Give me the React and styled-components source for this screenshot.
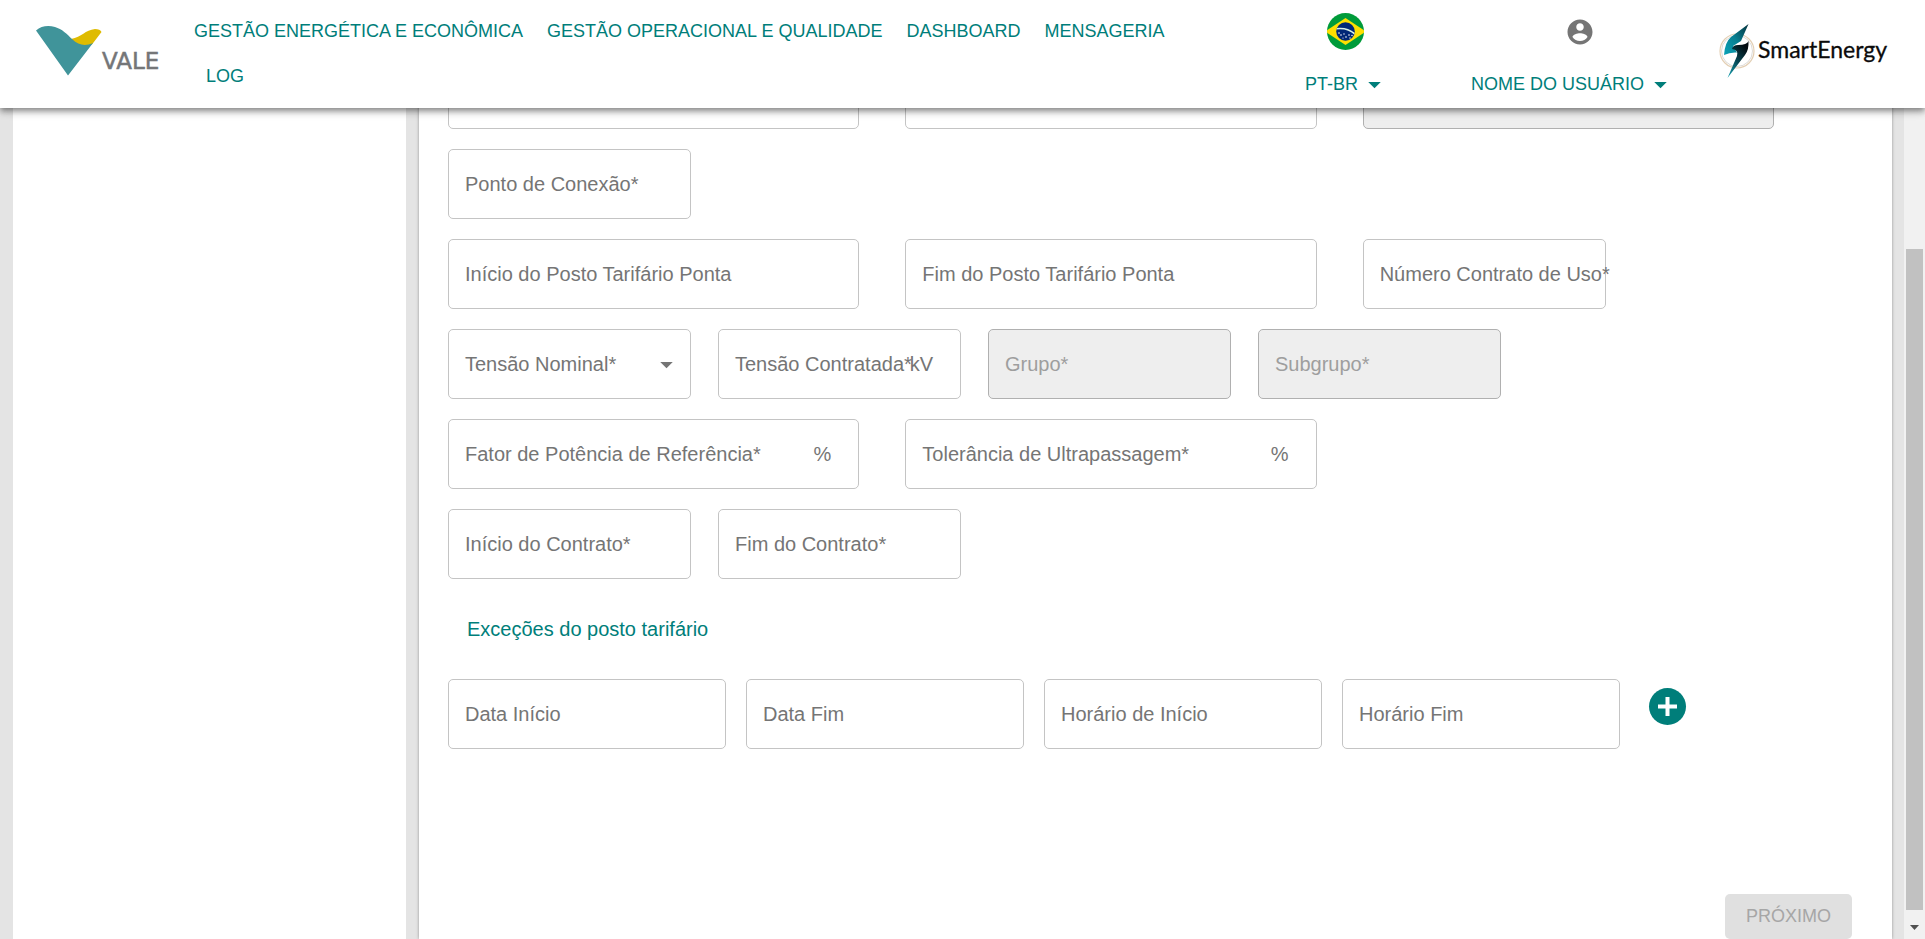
import React, { useId, useLayoutEffect, useRef } from 'react';
import styled, { createGlobalStyle } from 'styled-components';

const teal = '#007e7a';
const grey = '#757575';

const GlobalStyle = createGlobalStyle`
  *, *::before, *::after { box-sizing: border-box; }
  body {
    margin: 0;
    background: #e4e4e4;
    font-family: "Liberation Sans", Arial, sans-serif;
  }
`;

const Page = styled.div`
  display: flex;
  flex-direction: column;
  height: 100vh;
`;

const Header = styled.header`
  position: relative;
  z-index: 2;
  display: flex;
  flex-shrink: 0;
  align-items: flex-start;
  min-height: 108px;
  padding: 0 35px 0 36px;
  background: #fff;
  box-shadow:
    0 3px 5px -1px rgba(0, 0, 0, 0.3),
    0 5px 6px rgba(0, 0, 0, 0.16),
    0 1px 12px rgba(0, 0, 0, 0.14);
`;

const LogoLink = styled.a`
  display: block;
  flex-shrink: 0;
  margin-top: 24px;
  line-height: 0;
`;

const Nav = styled.nav`
  display: flex;
  flex: 1;
  flex-wrap: wrap;
  min-width: 0;
  margin: 9px 90px 0 28px;
`;

const NavLink = styled.a`
  padding: 0 12px;
  color: ${teal};
  font-size: 18px;
  line-height: 45px;
  text-decoration: none;
  white-space: nowrap;

  &:first-child { padding-left: 0; }
`;

const HeaderMenu = styled.div`
  display: flex;
  flex-direction: column;
  flex-shrink: 0;
  align-items: center;
  gap: 12px;
  margin-right: ${(p) => p.$after}px;
  padding-top: 13px;
`;

const MenuPicture = styled.div`
  display: flex;
  align-items: center;
  height: 37px;
  padding-left: ${(p) => p.$indent || 0}px;
`;

const MenuButton = styled.button`
  display: flex;
  align-items: center;
  gap: 4px;
  height: 45px;
  padding: 0 10px;
  border: 0;
  background: none;
  color: ${teal};
  font: inherit;
  font-size: 18px;
  white-space: nowrap;
`;

const Body = styled.div`
  display: flex;
  flex: 1;
  min-height: 0;
`;

const Scroller = styled.main`
  flex: 1;
  min-width: 0;
  overflow-y: auto;
  scrollbar-width: none;
`;

const Content = styled.div`
  display: flex;
  gap: 13px;
  min-height: 100%;
  padding: 0 12px 0 13px;
`;

const Sidebar = styled.aside`
  flex: 0 0 393px;
  background: #fff;
`;

const Panel = styled.form`
  display: flex;
  flex: 1;
  flex-direction: column;
  gap: 20px;
  min-width: 0;
  padding: 0 40px 0 29px;
  background: #fff;
  box-shadow: 0 0 3px rgba(0, 0, 0, 0.35);
`;

const ThirdsRow = styled.div`
  display: grid;
  grid-template-columns: repeat(3, minmax(0, 1fr));
  gap: 46px;
  padding-right: 78px;
`;

const CompactRow = styled.div`
  display: flex;
  gap: 27px;
`;

const ExceptionRow = styled.div`
  display: flex;
  align-items: flex-start;
  gap: 20px;
`;

const fieldWidths = { full: '100%', compact: '243px', exception: '278px' };

const FieldBox = styled.div`
  display: grid;
  grid-template-areas: 'field';
  grid-template-columns: minmax(0, 1fr);
  align-items: center;
  width: ${(p) => fieldWidths[p.$size]};
  min-width: 0;
  height: 70px;

  > * { grid-area: field; }
`;

const Control = styled.input`
  width: 100%;
  min-width: 0;
  height: 100%;
  margin: 0;
  padding: 0 17px;
  border: 1px solid ${(p) => (p.disabled ? '#b0b0b0' : '#c4c4c4')};
  border-radius: 5px;
  appearance: none;
  background: ${(p) => (p.disabled ? '#eee' : '#fff')};
  color: #212121;
  font: inherit;
  font-size: 20px;
`;

const FieldLabel = styled.label`
  padding-left: 17px;
  color: ${(p) => (p.$disabled ? '#9e9e9e' : grey)};
  font-size: 20px;
  line-height: 24px;
  pointer-events: none;
  white-space: nowrap;
`;

const Adornment = styled.span`
  display: flex;
  justify-self: end;
  padding-right: 28px;
  color: ${grey};
  font-size: 20px;
  line-height: 24px;
  pointer-events: none;
`;

const CaretSlot = styled(Adornment)`
  padding-right: 12px;
`;

const SectionTitle = styled.h2`
  margin: 18px 0;
  padding-left: 19px;
  color: ${teal};
  font-size: 20px;
  font-weight: 400;
  line-height: 24px;
`;

const AddButton = styled.button`
  display: flex;
  align-items: center;
  justify-content: center;
  flex-shrink: 0;
  width: 37px;
  height: 37px;
  margin: 9px 0 0 9px;
  padding: 0;
  border: 0;
  border-radius: 50%;
  background: ${teal};
`;

const NextButton = styled.button`
  align-self: flex-end;
  height: 45px;
  margin-top: 125px;
  padding: 0 21px;
  border: 0;
  border-radius: 5px;
  background: #e0e0e0;
  color: #a6a6a6;
  font: inherit;
  font-size: 18px;
`;

const ScrollTrack = styled.div`
  display: flex;
  flex-direction: column;
  flex: 0 0 21px;
  align-items: center;
  padding-top: 21px;
  background: #f1f1f1;
`;

const ScrollSpace = styled.div`
  flex: 120;
`;

const ScrollThumb = styled.div`
  flex: 661;
  width: 17px;
  background: #c1c1c1;
`;

const ScrollArrow = styled.div`
  display: flex;
  align-items: center;
  justify-content: center;
  width: 100%;
  height: 29px;
  padding-top: 6px;
`;

function Caret({ color = teal }) {
  return (
    <svg width="25" height="25" viewBox="0 0 24 24" fill={color} aria-hidden="true">
      <path d="M6 9.5l6 6 6-6z" />
    </svg>
  );
}

function Field({ label, size = 'full', disabled, unit, select }) {
  const id = useId();
  return (
    <FieldBox $size={size}>
      <Control as={select ? 'select' : 'input'} id={id} disabled={disabled} />
      {label && <FieldLabel htmlFor={id} $disabled={disabled}>{label}</FieldLabel>}
      {unit && <Adornment>{unit}</Adornment>}
      {select && <CaretSlot><Caret color={grey} /></CaretSlot>}
    </FieldBox>
  );
}

function ValeLogo() {
  return (
    <svg width="130" height="54" viewBox="0 0 130 54" role="img" aria-label="Vale">
      <path d="M35 15C46 13 49 6 59 5C62 5 65 6 65.500 8L56 20.500C48 25 40 20 35 15Z" fill="#dfbb00" />
      <path d="M0 6.500C5 2 12 1 19 3C26 5 31 10 36 15C43 22 50 22 57 19L32 51.500Z" fill="#40949a" />
      <text x="66" y="45" fill="#747678" stroke="#747678" strokeWidth="0.500" fontFamily="DejaVu Sans, sans-serif" fontSize="23">VALE</text>
    </svg>
  );
}

function SmartEnergyLogo() {
  return (
    <svg width="171" height="54" viewBox="0 0 171 54" role="img" aria-label="SmartEnergy">
      <defs>
        <linearGradient id="boltTop" x1="1" y1="0" x2="0" y2="1">
          <stop offset="0" stopColor="#06303a" />
          <stop offset="0.5" stopColor="#087f91" />
          <stop offset="1" stopColor="#0aa3b8" />
        </linearGradient>
        <linearGradient id="boltBottom" x1="0" y1="1" x2="0.6" y2="0">
          <stop offset="0" stopColor="#16a5b5" />
          <stop offset="0.55" stopColor="#064450" />
          <stop offset="1" stopColor="#020b10" />
        </linearGradient>
      </defs>
      <circle cx="18" cy="27" r="17" fill="none" stroke="#e3cfb4" strokeWidth="1.200" />
      <circle cx="18" cy="27" r="15.500" fill="none" stroke="#cfcac4" strokeWidth="0.700" />
      <path d="M29.500 0L12 13Q6 18 5 31Q11 28 18 28.500L14 22L22 17Z" fill="url(#boltTop)" />
      <path d="M29.500 17Q28 21 19 21Q14 21 13 25Q20 26 18 32L8.500 54L26 31Q30 26 29.500 17Z" fill="url(#boltBottom)" />
      <text x="39" y="34" fill="#0b0b0b" stroke="#0b0b0b" strokeWidth="0.300" fontFamily="Lato, sans-serif" fontSize="23">SmartEnergy</text>
    </svg>
  );
}

function BrazilFlag() {
  return (
    <svg width="37" height="37" viewBox="0 0 37 37" role="img" aria-label="Brasil">
      <defs>
        <clipPath id="flagRound"><circle cx="18.500" cy="18.500" r="18.500" /></clipPath>
        <clipPath id="globeRound"><circle cx="18.500" cy="18.500" r="9.300" /></clipPath>
      </defs>
      <g clipPath="url(#flagRound)">
        <rect width="37" height="37" fill="#009b3a" />
        <path d="M18.500 5L39 18.500L18.500 32L-2 18.500Z" fill="#fedf00" />
        <circle cx="18.500" cy="18.500" r="9.300" fill="#002776" />
        <path d="M8 16Q20 13.500 29 22" fill="none" stroke="#d7efe6" strokeWidth="1.600" clipPath="url(#globeRound)" />
        <g fill="#fff">
          <circle cx="12" cy="20" r="0.800" /><circle cx="14" cy="22" r="0.800" />
          <circle cx="17" cy="21" r="0.700" /><circle cx="19" cy="24" r="0.800" />
          <circle cx="22" cy="22" r="0.800" /><circle cx="23" cy="25" r="0.700" />
          <circle cx="25" cy="22.500" r="0.700" /><circle cx="16" cy="25" r="0.600" />
        </g>
      </g>
    </svg>
  );
}

function AccountIcon() {
  return (
    <svg width="30" height="30" viewBox="0 0 24 24" fill={grey} aria-hidden="true">
      <path d="M12 2C6.480 2 2 6.480 2 12s4.480 10 10 10 10-4.480 10-10S17.520 2 12 2zm0 3c1.660 0 3 1.340 3 3s-1.340 3-3 3-3-1.340-3-3 1.340-3 3-3zm0 14.200c-2.500 0-4.710-1.280-6-3.220.030-1.990 4-3.080 6-3.080 1.990 0 5.970 1.090 6 3.080-1.290 1.940-3.500 3.220-6 3.220z" />
    </svg>
  );
}

const links = [
  'GESTÃO ENERGÉTICA E ECONÔMICA',
  'GESTÃO OPERACIONAL E QUALIDADE',
  'DASHBOARD',
  'MENSAGERIA',
  'LOG',
];

export default function App() {
  const scroller = useRef(null);

  // The form opens scrolled to its end, where the next-step button is.
  useLayoutEffect(() => {
    scroller.current.scrollTop = scroller.current.scrollHeight;
  }, []);

  return (
    <Page>
      <GlobalStyle />
      <Header>
        <LogoLink href="#"><ValeLogo /></LogoLink>
        <Nav>
          {links.map((text) => <NavLink key={text} href="#">{text}</NavLink>)}
        </Nav>
        <HeaderMenu $after={64}>
          <MenuPicture><BrazilFlag /></MenuPicture>
          <MenuButton type="button">PT-BR <Caret /></MenuButton>
        </HeaderMenu>
        <HeaderMenu $after={36}>
          <MenuPicture $indent={16}><AccountIcon /></MenuPicture>
          <MenuButton type="button">NOME DO USUÁRIO <Caret /></MenuButton>
        </HeaderMenu>
        <LogoLink href="#"><SmartEnergyLogo /></LogoLink>
      </Header>

      <Body>
        <Scroller ref={scroller}>
          <Content>
            <Sidebar />
            <Panel>
              <ThirdsRow>
                <Field />
                <Field />
                <Field disabled />
              </ThirdsRow>
              <CompactRow>
                <Field size="compact" label="Ponto de Conexão*" />
              </CompactRow>
              <ThirdsRow>
                <Field label="Início do Posto Tarifário Ponta" />
                <Field label="Fim do Posto Tarifário Ponta" />
                <Field size="compact" label="Número Contrato de Uso*" />
              </ThirdsRow>
              <CompactRow>
                <Field size="compact" label="Tensão Nominal*" select />
                <Field size="compact" label="Tensão Contratada*" unit="kV" />
                <Field size="compact" label="Grupo*" disabled />
                <Field size="compact" label="Subgrupo*" disabled />
              </CompactRow>
              <ThirdsRow>
                <Field label="Fator de Potência de Referência*" unit="%" />
                <Field label="Tolerância de Ultrapassagem*" unit="%" />
              </ThirdsRow>
              <CompactRow>
                <Field size="compact" label="Início do Contrato*" />
                <Field size="compact" label="Fim do Contrato*" />
              </CompactRow>
              <SectionTitle>Exceções do posto tarifário</SectionTitle>
              <ExceptionRow>
                <Field size="exception" label="Data Início" />
                <Field size="exception" label="Data Fim" />
                <Field size="exception" label="Horário de Início" />
                <Field size="exception" label="Horário Fim" />
                <AddButton type="button" aria-label="Adicionar">
                  <svg width="19" height="19" viewBox="0 0 19 19" stroke="#fff" strokeWidth="4" aria-hidden="true">
                    <path d="M9.500 0v19M0 9.500h19" />
                  </svg>
                </AddButton>
              </ExceptionRow>
              <NextButton type="button" disabled>PRÓXIMO</NextButton>
            </Panel>
          </Content>
        </Scroller>
        <ScrollTrack aria-hidden="true">
          <ScrollSpace />
          <ScrollThumb />
          <ScrollArrow>
            <svg width="9" height="5" viewBox="0 0 9 5" fill="#505050"><path d="M0 0h9L4.500 5z" /></svg>
          </ScrollArrow>
        </ScrollTrack>
      </Body>
    </Page>
  );
}
